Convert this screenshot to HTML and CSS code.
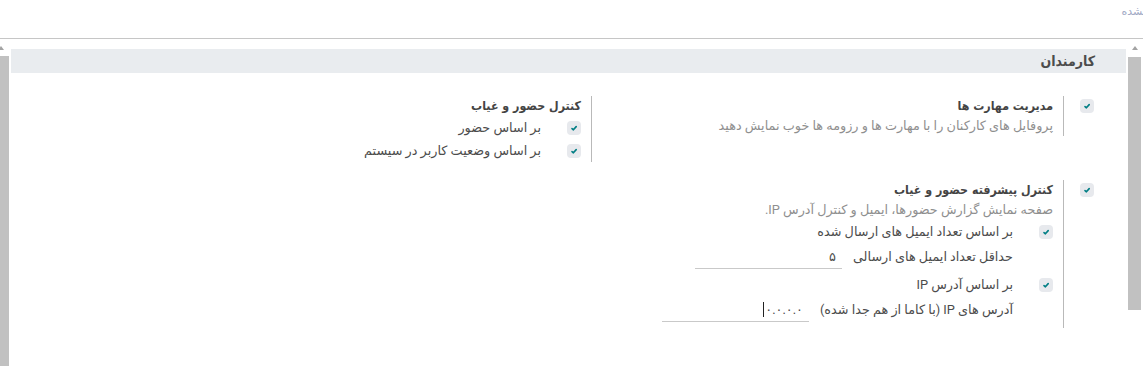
FILE: index.html
```html
<!DOCTYPE html>
<html lang="fa" dir="rtl">
<head>
    <meta charset="UTF-8">
    <title>تنظیمات کارمندان</title>
    <link rel="stylesheet" href="styles.css">
</head>
<body>
    <div class="topbar">
        <span class="top-note">نشده</span>
    </div>

    <div class="main">
        <div class="vscroll vscroll-right">
            <span class="arrow"></span>
            <span class="thumb"></span>
        </div>

        <div class="content">
            <div class="section-head">
                <h2>کارمندان</h2>
            </div>

            <div class="settings">
                <!-- skills -->
                <div class="setting">
                    <div class="setting-check">
                        <span class="check"><svg width="14" height="14" viewBox="0 0 14 14"><rect width="14" height="14" rx="4" fill="#e7e9ed"/><path d="M5 7.6 L6.4 8.8 L9.2 5.6" fill="none" stroke="#017e84" stroke-width="1.6" stroke-linecap="round" stroke-linejoin="round"/></svg></span>
                    </div>
                    <div class="setting-body">
                        <div class="setting-title">مدیریت مهارت ها</div>
                        <div class="setting-desc">پروفایل های کارکنان را با مهارت ها و رزومه ها خوب نمایش دهید</div>
                    </div>
                </div>

                <!-- attendance -->
                <div class="setting">
                    <div class="setting-check"></div>
                    <div class="setting-body">
                        <div class="setting-title">کنترل حضور و غیاب</div>
                        <div class="option">
                            <span class="check"><svg width="14" height="14" viewBox="0 0 14 14"><rect width="14" height="14" rx="4" fill="#e7e9ed"/><path d="M5 7.6 L6.4 8.8 L9.2 5.6" fill="none" stroke="#017e84" stroke-width="1.6" stroke-linecap="round" stroke-linejoin="round"/></svg></span>
                            <span class="option-label">بر اساس حضور</span>
                        </div>
                        <div class="option">
                            <span class="check"><svg width="14" height="14" viewBox="0 0 14 14"><rect width="14" height="14" rx="4" fill="#e7e9ed"/><path d="M5 7.6 L6.4 8.8 L9.2 5.6" fill="none" stroke="#017e84" stroke-width="1.6" stroke-linecap="round" stroke-linejoin="round"/></svg></span>
                            <span class="option-label">بر اساس وضعیت کاربر در سیستم</span>
                        </div>
                    </div>
                </div>

                <!-- advanced attendance -->
                <div class="setting setting-tall">
                    <div class="setting-check">
                        <span class="check"><svg width="14" height="14" viewBox="0 0 14 14"><rect width="14" height="14" rx="4" fill="#e7e9ed"/><path d="M5 7.6 L6.4 8.8 L9.2 5.6" fill="none" stroke="#017e84" stroke-width="1.6" stroke-linecap="round" stroke-linejoin="round"/></svg></span>
                    </div>
                    <div class="setting-body">
                        <div class="setting-title">کنترل پیشرفته حضور و غیاب</div>
                        <div class="setting-desc">صفحه نمایش گزارش حضورها، ایمیل و کنترل آدرس IP.</div>
                        <div class="option">
                            <span class="check"><svg width="14" height="14" viewBox="0 0 14 14"><rect width="14" height="14" rx="4" fill="#e7e9ed"/><path d="M5 7.6 L6.4 8.8 L9.2 5.6" fill="none" stroke="#017e84" stroke-width="1.6" stroke-linecap="round" stroke-linejoin="round"/></svg></span>
                            <span class="option-label">بر اساس تعداد ایمیل های ارسال شده</span>
                        </div>
                        <div class="field">
                            <span class="field-label">حداقل تعداد ایمیل های ارسالی</span>
                            <span class="input">۵</span>
                        </div>
                        <div class="option option-gap">
                            <span class="check"><svg width="14" height="14" viewBox="0 0 14 14"><rect width="14" height="14" rx="4" fill="#e7e9ed"/><path d="M5 7.6 L6.4 8.8 L9.2 5.6" fill="none" stroke="#017e84" stroke-width="1.6" stroke-linecap="round" stroke-linejoin="round"/></svg></span>
                            <span class="option-label">بر اساس آدرس IP</span>
                        </div>
                        <div class="field">
                            <span class="field-label">آدرس های IP (با کاما از هم جدا شده)</span>
                            <span class="input"><span class="caret">۰.۰.۰.۰</span></span>
                        </div>
                    </div>
                </div>
            </div>
        </div>

        <div class="vscroll vscroll-left">
            <span class="arrow"></span>
            <span class="thumb"></span>
        </div>
    </div>
</body>
</html>
```

FILE: styles.css
```css
:root {
    --text-color: #4c4c4c;
    --muted-color: #8f8f8f;
    --line-color: #b9b9b9;
    --head-bg: #e9ecef;
    --scroll-color: #c1c1c1;
}

html, body {
    height: 100%;
}

body {
    margin: 0;
    font-family: Roboto, "DejaVu Sans", sans-serif;
    font-size: 12.8px;
    color: var(--text-color);
    background: #fff;
    overflow: hidden;
    display: flex;
    flex-direction: column;
}

.topbar {
    height: 38px;
    border-bottom: 1px solid #c6c6c6;
    overflow: hidden;
    white-space: nowrap;
}

.top-note {
    display: inline-block;
    margin-right: -3px;
    margin-top: 5px;
    font-size: 11px;
    color: #9fa9c4;
}

.main {
    flex: 1;
    display: flex;
    min-height: 0;
}

/* fake scrollbars */
.vscroll {
    display: flex;
    flex-direction: column;
    align-items: center;
}

.vscroll .arrow {
    width: 0;
    height: 0;
    border-left: 3px solid transparent;
    border-right: 3px solid transparent;
    border-bottom: 4px solid #a3a3a3;
    margin-top: 7px;
}

.vscroll .thumb {
    background: var(--scroll-color);
}

.vscroll-right {
    width: 15px;
    margin-left: 2px;
    align-items: flex-end;
}

.vscroll-right .arrow {
    margin-left: 4px;
}

.vscroll-right .thumb {
    width: 13px;
    height: 253px;
    margin-top: 7px;
    margin-right: 2px;
    align-self: flex-start;
}

.vscroll-left {
    width: 9px;
    margin-right: 2px;
    align-items: flex-start;
}

.vscroll-left .arrow {
    margin-right: 2px;
    margin-left: -2px;
    align-self: flex-end;
}

.vscroll-left .thumb {
    width: 9px;
    flex: 1;
    margin-top: 6px;
    align-self: stretch;
}

.content {
    flex: 1;
    padding-top: 10px;
}

.section-head {
    background: var(--head-bg);
    height: 24px;
    padding-right: 31px;
}

.section-head h2 {
    margin: 0;
    font-family: "DejaVu Sans Condensed", "DejaVu Sans", sans-serif;
    font-size: 14px;
    line-height: 24px;
    font-weight: 700;
    color: var(--text-color);
}

.settings {
    display: grid;
    grid-template-columns: 472px 472px;
    row-gap: 18px;
    padding-right: 32px;
    margin-top: 23px;
}

.setting {
    display: flex;
    align-items: flex-start;
}

.setting-check {
    width: 30px;
    flex: none;
    padding-top: 3px;
}

.check {
    display: block;
    width: 14px;
    height: 14px;
}

.check svg {
    display: block;
}

.setting-body {
    border-right: 1px solid var(--line-color);
    padding-right: 10px;
}

.setting-tall .setting-body {
    padding-bottom: 6px;
}

.setting-title {
    font-family: "DejaVu Sans Condensed", "DejaVu Sans", sans-serif;
    font-size: 12.3px;
    font-weight: 700;
    line-height: 20px;
    color: #444;
}

.setting-desc {
    line-height: 20px;
    color: var(--muted-color);
}

.option {
    display: flex;
    align-items: center;
    height: 23px;
}

.option-gap {
    margin-top: 4px;
}

.option-label {
    margin-right: 26px;
}

.field {
    display: flex;
    align-items: center;
    height: 26px;
    padding-right: 40px;
}

.input {
    align-self: stretch;
    box-sizing: border-box;
    width: 147px;
    margin-right: 11px;
    padding: 4px 6px 0;
    border-bottom: 1px solid #c9c9c9;
    line-height: 20px;
}

.caret {
    border-left: 1px solid #222;
    padding-left: 1px;
}
```
